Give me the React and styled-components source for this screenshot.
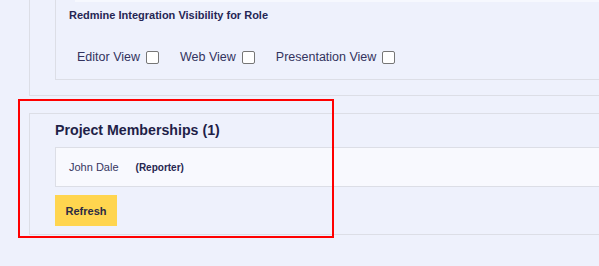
import React from "react";
import styled, { createGlobalStyle } from "styled-components";

const GlobalStyle = createGlobalStyle`
  html, body {
    margin: 0;
    padding: 0;
    background: #eef1fc;
    font-family: "Liberation Sans", Arial, sans-serif;
    overflow: hidden;
  }
`;

const Page = styled.div`
  position: relative;
  padding-left: 29px;
  height: 266px;
`;

const Panel = styled.section`
  border: 1px solid #dcdee6;
  border-right: none;
  border-top: ${(p) => (p.$open ? "none" : "1px solid #dcdee6")};
  padding: ${(p) => (p.$open ? "0" : "7px")} 0 ${(p) => p.$bottom}px 25px;
  margin-top: ${(p) => p.$gap || 0}px;
`;

const InnerCard = styled.div`
  border: 1px solid #dcdee6;
  border-top: none;
  border-right: none;
  padding-bottom: 14px;
`;

const FieldEdge = styled.div`
  height: 2px;
  margin-left: 19px;
  background: #f6f8fe;
`;

const SubTitle = styled.h4`
  margin: 6px 0 0;
  padding-left: 13px;
  font-size: 11px;
  line-height: 14px;
  font-weight: 700;
  color: #262654;
`;

const CheckRow = styled.div`
  display: flex;
  align-items: center;
  gap: 21px;
  margin-top: 27px;
  padding-left: 21px;
`;

const CheckLabel = styled.label`
  display: flex;
  align-items: center;
  gap: 6px;
  font-size: 12.5px;
  line-height: 16px;
  color: #33335e;
`;

const Box = styled.input.attrs({ type: "checkbox" })`
  appearance: none;
  margin: 0;
  width: 13px;
  height: 13px;
  border: 1px solid #767676;
  border-radius: 2px;
  background: #fff;
`;

const Heading = styled.h3`
  margin: 0;
  font-size: 14.2px;
  line-height: 18px;
  font-weight: 700;
  color: #1f1f48;
`;

const MemberRow = styled.div`
  display: flex;
  align-items: center;
  gap: 17px;
  height: 38px;
  margin-top: 8px;
  padding-left: 13px;
  background: #f8f9fe;
  border: 1px solid #dcdee6;
  border-right: none;
`;

const MemberName = styled.span`
  font-size: 11px;
  color: #36365f;
`;

const MemberRole = styled.span`
  font-size: 10px;
  font-weight: 700;
  color: #262650;
`;

const RefreshButton = styled.button`
  display: block;
  margin-top: 8px;
  width: 62px;
  height: 31px;
  border: none;
  background: #ffd54f;
  font-family: inherit;
  font-size: 11px;
  font-weight: 700;
  color: #2b2b44;
  padding: 0;
`;

const Highlight = styled.div`
  position: absolute;
  left: 18px;
  top: 99px;
  width: 316px;
  height: 139px;
  box-sizing: border-box;
  border: 2px solid #ff0000;
  pointer-events: none;
`;

const views = ["Editor View", "Web View", "Presentation View"];

const App = () => (
  <>
    <GlobalStyle />
    <Page>
      <Panel $open $bottom={15}>
        <InnerCard>
          <FieldEdge />
          <SubTitle>Redmine Integration Visibility for Role</SubTitle>
          <CheckRow>
            {views.map((v) => (
              <CheckLabel key={v}>
                {v}
                <Box />
              </CheckLabel>
            ))}
          </CheckRow>
        </InnerCard>
      </Panel>
      <Panel $gap={17} $bottom={8}>
        <Heading>Project Memberships (1)</Heading>
        <MemberRow>
          <MemberName>John Dale</MemberName>
          <MemberRole>(Reporter)</MemberRole>
        </MemberRow>
        <RefreshButton>Refresh</RefreshButton>
      </Panel>
      <Highlight />
    </Page>
  </>
);

export default App;
